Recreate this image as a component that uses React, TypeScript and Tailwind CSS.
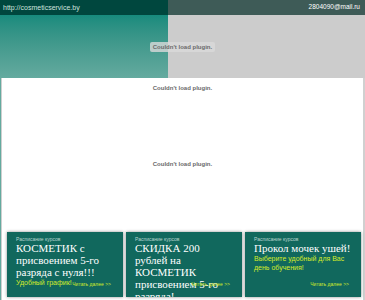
import React from "react";

const sans = { fontFamily: "'Liberation Sans', Arial, sans-serif" };

function Plugin({ boxed }: { boxed?: boolean }) {
  return (
    <div
      className={`text-[6px] font-bold text-[#6a6a6a] leading-[8px] ${boxed ? "bg-[#d9d9d9]/80 px-[3px] py-[1px] rounded-[2px]" : ""}`}
      style={sans}
    >
      Couldn't load plugin.
    </div>
  );
}

function Card({
  title,
  sub,
}: {
  title: React.ReactNode;
  sub?: React.ReactNode;
}) {
  return (
    <div className="relative w-[116px] h-[65px] bg-[#11685d] shadow-[0_0_3px_rgba(0,0,0,0.45)] overflow-hidden pl-[9px] pr-[2px] pt-[4px]">
      <div className="text-[5px] leading-[6px] text-[#b9d4cf]" style={sans}>
        Расписание курсов
      </div>
      <div
        className="text-[11px] leading-[12px] text-white whitespace-nowrap"
        style={{ fontFamily: "'Liberation Serif', 'Times New Roman', serif" }}
      >
        {title}
      </div>
      {sub && (
        <div className="text-[7px] leading-[8.5px] mt-[1px] text-[#d4ec2a]" style={sans}>
          {sub}
        </div>
      )}
      <div
        className="absolute right-[12px] bottom-[10px] text-[5px] leading-[6px] text-[#d4ec2a]"
        style={sans}
      >
        Читать далее &gt;&gt;
      </div>
    </div>
  );
}

export default function App() {
  return (
    <div className="w-[365px] h-[300px] overflow-hidden bg-[#cccccc] relative leading-none" style={sans}>
      {/* top zone */}
      <div className="flex h-[78px]">
        <div className="w-[168px] flex flex-col">
          <div className="h-[15px] bg-[#00473e] flex items-center pl-[3px] text-[7px] text-[#cfe3df]">
            http://cosmeticservice.by
          </div>
          <div className="flex-1 bg-gradient-to-b from-[#178b7d] to-[#64aa9f]" />
        </div>
        <div className="flex-1 flex flex-col">
          <div className="h-[15px] bg-[#3e5b57] flex items-center justify-end pr-[5px] text-[6.5px] text-white">
            2804090@mail.ru
          </div>
          <div className="flex-1 bg-[#cccccc]" />
        </div>
      </div>
      <div className="absolute left-0 right-0 top-[42px] flex justify-center">
        <Plugin boxed />
      </div>
      {/* main white panel */}
      <div className="flex h-[222px]">
        <div className="w-[1px] bg-[#64aa9f]" />
        <div className="flex-1 bg-white border-l border-[#cfcfcf] border-r-2 border-r-[#d0d0d0] flex flex-col items-center">
          <div className="mt-[6px]">
            <Plugin />
          </div>
          <div className="mt-[68px]">
            <Plugin />
          </div>
          <div className="mt-[64px] w-full flex gap-[3px] pl-[5px]">
            <Card
              title={
                <>
                  КОСМЕТИК с<br />
                  присвоением 5-го
                  <br />
                  разряда с нуля!!!
                </>
              }
              sub="Удобный график!"
            />
            <Card
              title={
                <>
                  СКИДКА 200
                  <br />
                  рублей на
                  <br />
                  КОСМЕТИК
                  <br />
                  присвоением 5-го
                  <br />
                  разряда!
                </>
              }
            />
            <Card
              title="Прокол мочек ушей!"
              sub={
                <>
                  Выберите удобный для Вас
                  <br />
                  день обучения!
                </>
              }
            />
          </div>
        </div>
      </div>
    </div>
  );
}
